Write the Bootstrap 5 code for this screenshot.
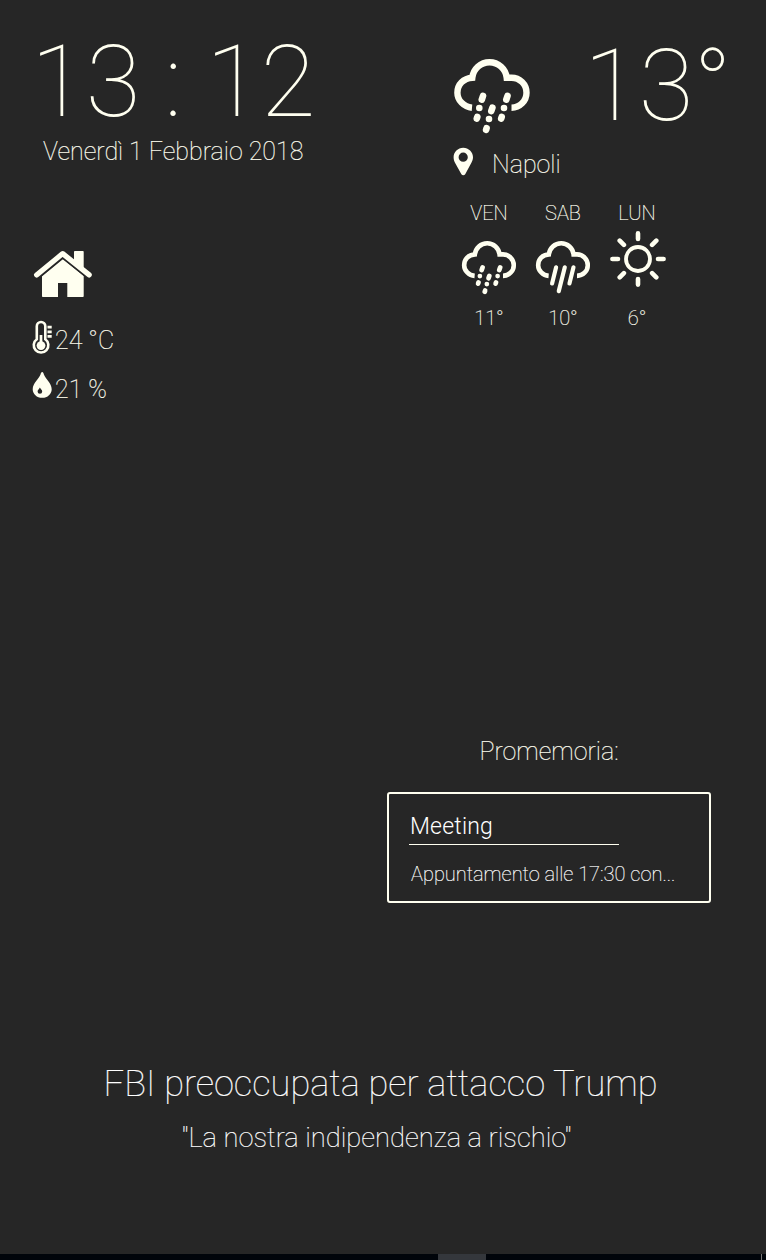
<!DOCTYPE html>
<html lang="it">
<head>
<meta charset="utf-8">
<meta name="viewport" content="width=device-width, initial-scale=1">
<title>Smart mirror</title>
<link href="https://cdn.jsdelivr.net/npm/bootstrap@5.3.0/dist/css/bootstrap.min.css" rel="stylesheet">
<style>
:root{--ivory:#fffff0}
body{background:#262626;color:var(--ivory);font-family:Roboto,"Liberation Sans",sans-serif;font-weight:100;font-size:25px;line-height:30px;-webkit-text-stroke:.2px}
.mirror{height:1260px;overflow:hidden}
svg{display:block;fill:none;stroke:var(--ivory);flex:none}
.solid{fill:var(--ivory);stroke:none}
.upper{height:737px;padding-top:32px}
.col-clock{width:453px;padding-left:33px}
.digits{font-size:100px;line-height:100px;white-space:pre;-webkit-text-stroke:0}
.col-clock .digits{margin-left:-2px}
.date{margin:5px 0 0 10px}
.house{margin:83px 0 22px}
.reading{height:34px;gap:3px}
.reading svg{margin-left:-1px}
.temp-in{margin-top:6px}
.humidity{margin-top:17px}
.hum-in{margin-top:4px}
.outside{height:104px}
.outside .cloud{margin-top:26px}
.outside .digits{margin:4px 0 0 53px}
.place{margin-top:11px;height:30px;gap:17px}
.city{margin-top:3px;padding-left:1px}
.forecast{margin:24px 0 0 -1px;font-size:20px;line-height:24px}
.day{width:74px}
.day svg{margin-top:15px}
.day .sun{margin:6px 0 0 2px}
.glyph{height:81px}
.notes{width:324px;margin-left:387px}
.note-box{border:2px solid var(--ivory);border-radius:3px;height:111px;margin-top:25px;padding:17px 20px 0;color:#fff}
.note-title{font-size:23px;font-weight:300;letter-spacing:.2px;width:210px;height:34px;line-height:32px;padding-left:1px;border-bottom:1px solid var(--ivory);-webkit-text-stroke:0}
.note-text{font-size:20px;line-height:24px;margin-top:17px;padding-left:2px}
.news{margin-top:161px;color:#fff}
.headline{font-size:36.2px;line-height:40px;margin-right:5px}
.subline{font-size:27.3px;line-height:32px;margin:18px 13px 0 0}
.strip{height:6px;background:#00040a;padding-left:438px;padding-right:4px}
.strip i{display:block;height:6px;width:48px;background:#34373c}
.strip i+i{width:1px;background:#777}
</style>
</head>
<body>
<svg width="0" height="0" class="position-absolute">
  <symbol id="cloud" viewBox="0 0 78 76">
    <path stroke-width="6.4" d="M19 49.7C11 49 4.4 42.5 4.4 34.7C4.4 26.5 10.5 20.3 19.3 19.7A17.3 17.3 0 0 1 53.7 19.7H58.5A15 15 0 0 1 58.5 49.7"/>
  </symbol>
  <symbol id="sleet" viewBox="0 0 78 76">
    <use href="#cloud" width="78" height="76"/>
    <path stroke-width="6.6" stroke-linecap="round" d="M30 38l-1.2 3.6M26.3 50v.01M24.3 58.9l-.5 1.6M39.4 49.7l-1.1 3.4M36 61v.01M33.6 70.1l-.5 1.7M54.5 38l-1.2 3.6M51 50v.01M48.7 58.9l-.5 1.6"/>
  </symbol>
  <symbol id="rain" viewBox="0 0 78 76">
    <use href="#cloud" width="78" height="76"/>
    <path stroke-width="5.8" stroke-linecap="round" d="M29.4 37.8L23.8 60.2M41.5 37.8L33.1 70.9M53.6 37.8L48 60.2"/>
  </symbol>
</svg>
<div class="mirror d-flex flex-column">
  <section class="upper d-flex">
    <div class="col-clock">
      <div class="digits">13 : 12</div>
      <div class="date">Venerdì 1 Febbraio 2018</div>
      <svg class="house" width="60" height="48" viewBox="0 0 60 48">
        <path class="solid" d="M29.7 8.8L50.7 26V46.2Q50.7 47 49.9 47H34.3V33H25V47H9.8Q9 47 9 46.2V26Z"/>
        <path stroke="#262626" stroke-width="8" d="M3.5 25.6L29.7 4.2L56.8 25.6"/>
        <path class="solid" d="M41 12V1.8Q41 1 41.8 1H49.9Q50.7 1 50.7 1.8V20Z"/>
        <path stroke-width="5.2" stroke-linejoin="round" stroke-linecap="round" d="M3.6 24.9L29.7 3.6L56.2 24.9"/>
      </svg>
      <div class="reading d-flex">
        <svg width="20" height="35" viewBox="0 0 20 35">
          <path stroke-width="2.6" d="M4.8 19.3V6.2a4.2 4.2 0 0 1 8.5 0V19.3a7.3 7.3 0 1 1-8.5 0Z"/>
          <path stroke-width="2.7" d="M9 15V25M15.5 7.2h4.2M15.5 11.8h4.2M15.5 16.4h4.2"/>
          <circle class="solid" cx="9" cy="25.6" r="4.4"/>
        </svg>
        <span class="temp-in">24 °C</span>
      </div>
      <div class="reading humidity d-flex">
        <svg width="20" height="28" viewBox="0 0 20 28">
          <path class="solid" fill-rule="evenodd" d="M10.2 1C11.2 1 11.4 2 11.8 3.2C13.5 8.3 19.7 12 19.7 18.2C19.7 23 15.6 26.8 10.2 26.8S.7 23 .7 18.2C.7 12 6.9 8.3 8.6 3.2C9 2 9.2 1 10.2 1ZM7.9 16.5C7.3 18 5.6 18.9 5.6 20.4A2.3 2.3 0 0 0 10.2 20.4C10.2 18.9 8.5 18 7.9 16.5Z"/>
        </svg>
        <span class="hum-in">21 %</span>
      </div>
    </div>
    <div>
      <div class="outside d-flex">
        <svg class="cloud" width="78" height="76"><use href="#sleet"/></svg>
        <div class="digits">13°</div>
      </div>
      <div class="place d-flex">
        <svg width="21" height="29" viewBox="0 0 21 29">
          <path class="solid" fill-rule="evenodd" d="M10.2.7C15.6.7 20 5 20 10.2C20 12.5 19.2 14 18.4 15.7L12.2 27.2C11.4 28.7 9.2 28.7 8.4 27.2L2 15.7C1.2 14 .6 12.5.6 10.2C.6 5 4.9.7 10.2.7ZM10.2 5.6A4.6 4.6 0 1 0 10.2 14.8A4.6 4.6 0 1 0 10.2 5.6Z"/>
        </svg>
        <span class="city">Napoli</span>
      </div>
      <div class="forecast d-flex text-center">
        <div class="day"><div>VEN</div><div class="glyph d-flex justify-content-center"><svg width="56" height="55"><use href="#sleet"/></svg></div><div>11°</div></div>
        <div class="day"><div>SAB</div><div class="glyph d-flex justify-content-center"><svg width="56" height="55"><use href="#rain"/></svg></div><div>10°</div></div>
        <div class="day"><div>LUN</div><div class="glyph d-flex justify-content-center">
          <svg class="sun" width="56" height="56" viewBox="-28 -28 56 56">
            <circle r="12" stroke-width="3.8"/>
            <path stroke-width="4.6" stroke-linecap="round" d="M0-25.6V-20M0 25.6V20M-25.6 0H-20M25.6 0H20M-18.3-18.3l4.2 4.2M18.3-18.3l-4.2 4.2M-18.3 18.3l4.2-4.2M18.3 18.3l-4.2-4.2"/>
          </svg></div><div>6°</div></div>
      </div>
    </div>
  </section>
  <section class="notes">
    <div class="text-center">Promemoria:</div>
    <div class="note-box">
      <div class="note-title">Meeting</div>
      <div class="note-text text-nowrap">Appuntamento alle 17:30 con...</div>
    </div>
  </section>
  <section class="news text-center">
    <div class="headline">FBI preoccupata per attacco Trump</div>
    <div class="subline">"La nostra indipendenza a rischio"</div>
  </section>
  <div class="strip d-flex justify-content-between mt-auto"><i></i><i></i></div>
</div>
<script src="https://cdn.jsdelivr.net/npm/bootstrap@5.3.0/dist/js/bootstrap.bundle.min.js"></script>
</body>
</html>
